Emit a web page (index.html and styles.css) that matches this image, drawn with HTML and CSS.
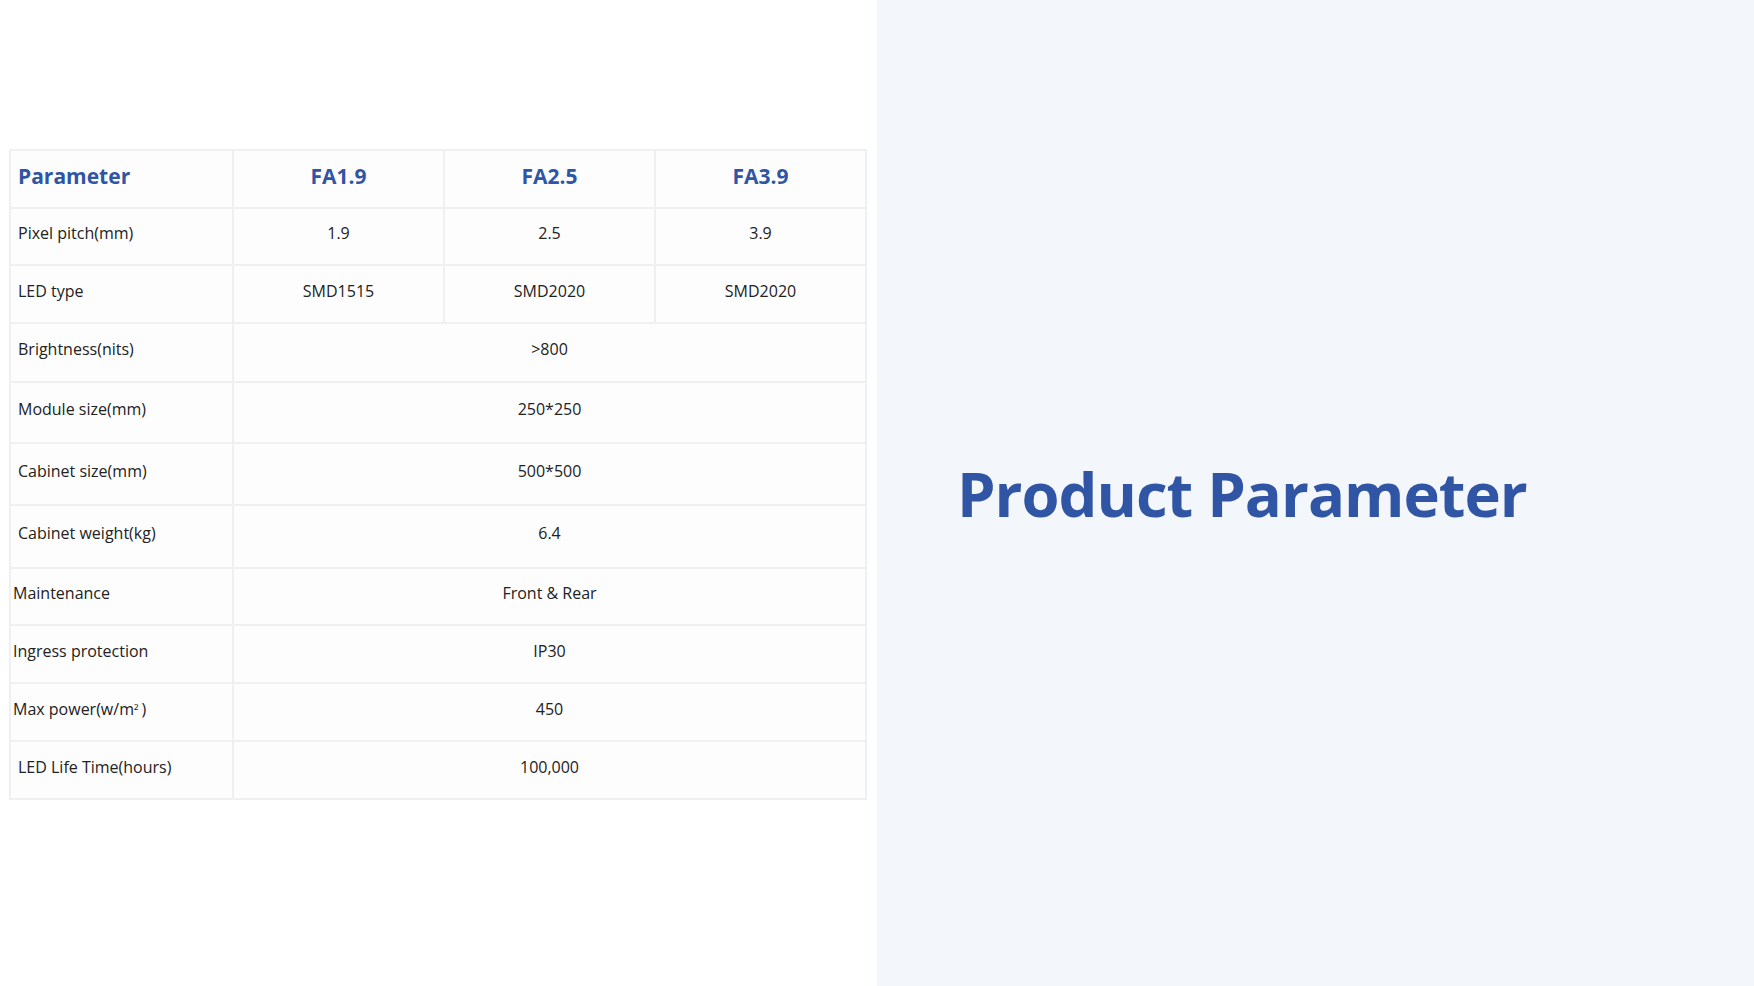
FILE: index.html
```html
<!DOCTYPE html>
<html lang="en">
<head>
    <meta charset="UTF-8">
    <title>Product Parameter</title>
    <link rel="stylesheet" href="styles.css">
</head>
<body>
    <div class="page">
        <div class="left">
            <table class="params">
                <colgroup>
                    <col class="col-label">
                    <col class="col-model">
                    <col class="col-model">
                    <col class="col-model">
                </colgroup>
                <tr class="head h58">
                    <th class="label">Parameter</th>
                    <th>FA1.9</th>
                    <th>FA2.5</th>
                    <th>FA3.9</th>
                </tr>
                <tr class="h57">
                    <td class="label">Pixel pitch(mm)</td>
                    <td>1.9</td>
                    <td>2.5</td>
                    <td>3.9</td>
                </tr>
                <tr class="h58">
                    <td class="label">LED type</td>
                    <td>SMD1515</td>
                    <td>SMD2020</td>
                    <td>SMD2020</td>
                </tr>
                <tr class="h59">
                    <td class="label">Brightness(nits)</td>
                    <td colspan="3">&gt;800</td>
                </tr>
                <tr class="h61">
                    <td class="label">Module size(mm)</td>
                    <td colspan="3">250*250</td>
                </tr>
                <tr class="h62">
                    <td class="label">Cabinet size(mm)</td>
                    <td colspan="3">500*500</td>
                </tr>
                <tr class="h63">
                    <td class="label">Cabinet weight(kg)</td>
                    <td colspan="3">6.4</td>
                </tr>
                <tr class="h57">
                    <td class="label tight">Maintenance</td>
                    <td colspan="3">Front &amp; Rear</td>
                </tr>
                <tr class="h58">
                    <td class="label tight">Ingress protection</td>
                    <td colspan="3">IP30</td>
                </tr>
                <tr class="h58">
                    <td class="label tight">Max power(w/m<span class="sq">²</span>)</td>
                    <td colspan="3">450</td>
                </tr>
                <tr class="h58">
                    <td class="label">LED Life Time(hours)</td>
                    <td colspan="3">100,000</td>
                </tr>
            </table>
        </div>
        <div class="right">
            <h1>Product Parameter</h1>
        </div>
    </div>
</body>
</html>
```

FILE: styles.css
```css
body {
    margin: 0;
    font-family: "Open Sans", "Noto Sans", sans-serif;
    color: #222;
    background: #fff;
}
.page {
    display: flex;
    height: 986px;
}
.left {
    width: 877px;
    padding: 149px 0 0 9px;
    box-sizing: border-box;
}
.params {
    border-collapse: collapse;
    width: 855px;
    table-layout: fixed;
}
.col-label {
    width: 223px;
}
.col-model {
    width: 211px;
}
.params th,
.params td {
    border: 2px solid #f0f0f0;
    background: #fdfdfe;
    text-align: center;
    font-size: 16px;
    padding: 0 0 7px 0;
}
.params th {
    color: #2f55a4;
    font-size: 21px;
    font-weight: bold;
}
.params .label {
    text-align: left;
    padding-left: 7px;
}
.params .tight {
    padding-left: 2px;
}
.sq {
    margin-right: 3px;
    font-size: 13px;
}
.h57 { height: 57px; }
.h58 { height: 58px; }
.h59 { height: 59px; }
.h61 { height: 61px; }
.h62 { height: 62px; }
.h63 { height: 63px; }
.right {
    flex: 1;
    background: #f3f6fb;
    display: flex;
    align-items: center;
    padding-left: 80px;
}
.right h1 {
    margin: 0;
    color: #2f55a4;
    font-size: 61.5px;
    font-weight: bold;
    letter-spacing: -1px;
}
```
